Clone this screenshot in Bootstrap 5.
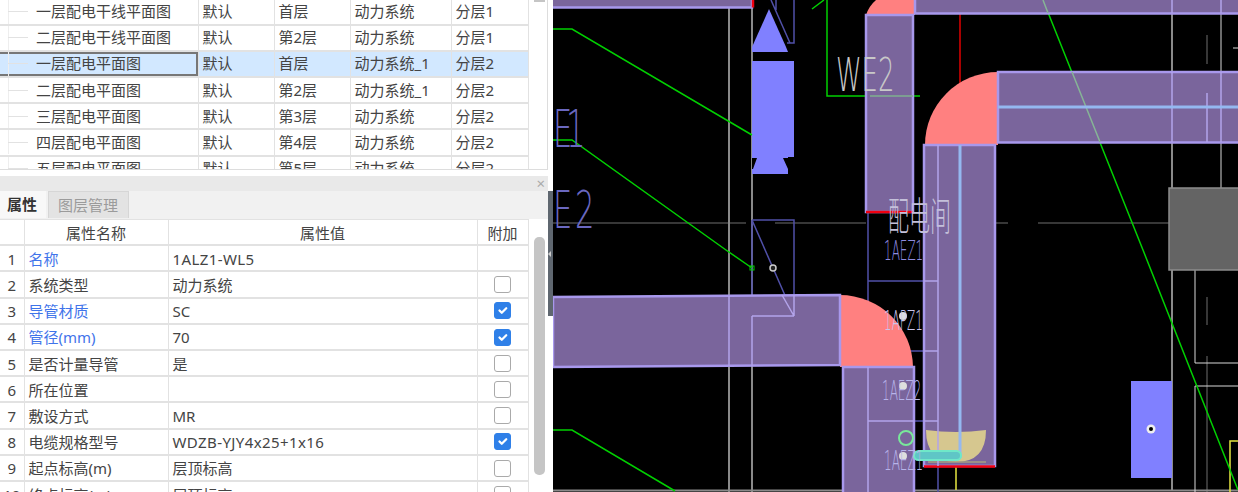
<!DOCTYPE html>
<html lang="zh-CN">
<head>
  <meta charset="UTF-8" />
  <title>配电平面图</title>
  <link href="https://cdn.jsdelivr.net/npm/bootstrap@5.3.0/dist/css/bootstrap.min.css" rel="stylesheet">
  <style>
    html, body { height: 492px; overflow: hidden; margin: 0; background: #fff; }
    body { font-family: "Noto Sans", "Noto Sans CJK SC", sans-serif; font-size: 15px; color: #444; line-height: 1; }

    .app-shell { width: 1238px; height: 492px; }
    .side-panel { width: 548px; flex: none; }
    .top-pane { height: 170px; overflow: hidden; border-bottom: 1px solid #ddd; border-right: 1px solid #ddd; }
    .gap-pane { height: 6px; }
    .title-bar { height: 15px; background: #e9e9e9; color: #aaa; font-size: 15px; padding-right: 3px; }
    .tab-strip { height: 28px; background: #f1f1f1; }
    .tab-on, .tab-off { height: 27px; font-size: 15px; white-space: nowrap; }
    .tab-on { width: 46px; padding: 0 7px; background: #f8f8f8; color: #333; font-weight: 700; }
    .tab-off { width: 81px; padding: 0 9px; margin-left: 2px; background: #e3e3e3; color: #9b9b9b; border: 1px solid #d6d6d6; border-bottom: 0; }
    .prop-pane { height: 273px; overflow: hidden; }

    .grid-table { width: 528px; table-layout: fixed; margin: 0; flex: none; border-collapse: collapse; }
    .grid-table td, .grid-table th {
      height: 26.2px; padding: 0 4px 0 4px; border: 1px solid #e2e2e2; border-top-width: 2px;
      font-size: 15px; font-weight: 400; color: #444; vertical-align: middle; white-space: nowrap; overflow: hidden;
      box-shadow: none; background: #fff;
    }
    .grid-table tr > :first-child { border-left: 0; }
    .top-table { margin-top: -2.6px; }
    .prop-table { margin-top: -1px; }
    .prop-table td, .prop-table th { padding-top: 2px; }
    .top-table tr.row-sel td { background: #d2e8ff; }
    .top-table tr.row-sel td.cell-focus { box-shadow: inset 0 2px #777, inset -2px 0 #777, inset 0 -2px #777; background: #d2e8ff; }
    .tree-stub { width: 36px; height: 24px; flex: none;
      background: linear-gradient(#e2e2e2, #e2e2e2) 8px center / 20px 1px no-repeat, linear-gradient(#eee, #eee) 8px 0 / 1px 100% no-repeat; }
    .top-table td.cell-name { padding: 0; }

    .col-tree { width: 198px; } .col-a { width: 76px; } .col-b { width: 76px; } .col-c { width: 101px; } .col-d { width: 77px; }
    .col-num { width: 24px; } .col-key { width: 144px; } .col-val { width: 309px; } .col-add { width: 51px; }
    .prop-table th { text-align: center; background: #fff; }
    .prop-table td.cell-num { text-align: center; padding: 2px 0 0 0; }
    .prop-table td.cell-add { text-align: center; padding: 0; }
    .key-blue { color: #3f74ea !important; }
    .val-latin { letter-spacing: .4px; }
    .prop-table .form-check-input { width: 17px; height: 17px; margin: 0; float: none; vertical-align: middle; border: 1.5px solid #aaa; border-radius: 3px; }
    .prop-table .form-check-input:checked { background-color: #2f80e8; border-color: #2f80e8; }

    .rail { flex: 1; }
    .rail-thumb { width: 11px; height: 238px; margin: 18px 0 0 5px; background: #c5c5c5; border-radius: 5px; }
    .rail-end { width: 11px; height: 2px; margin-left: 5px; background: #c5c5c5; }

    .splitter { width: 5px; flex: none; }
    .splitter-top { height: 191px; background: #fff; }
    .splitter-grip { height: 125px; background: #5f6770; }
    .grip-arrow { width: 0; height: 0; border: 3px solid transparent; border-right-color: #ccc; border-left-width: 0; }
    .splitter-end { flex: 1; background: #fff; }

    .cad-view { width: 685px; height: 492px; flex: none; background: #000; display: block; }
    .cad-view text { font-family: "DejaVu Sans", "Noto Sans CJK SC", sans-serif; font-weight: 200; }
  </style>
</head>
<body>
  <div class="app-shell d-flex">
    <div class="side-panel d-flex flex-column">
      <!-- drawing list -->
      <div class="top-pane d-flex">
        <table class="table grid-table top-table">
          <colgroup><col class="col-tree"><col class="col-a"><col class="col-b"><col class="col-c"><col class="col-d"></colgroup>
          <tbody>
            <tr><td class="cell-name"><div class="d-flex align-items-center"><span class="tree-stub"></span>一层配电干线平面图</div></td><td>默认</td><td>首层</td><td>动力系统</td><td>分层1</td></tr>
            <tr><td class="cell-name"><div class="d-flex align-items-center"><span class="tree-stub"></span>二层配电干线平面图</div></td><td>默认</td><td>第2层</td><td>动力系统</td><td>分层1</td></tr>
            <tr class="row-sel"><td class="cell-name cell-focus"><div class="d-flex align-items-center"><span class="tree-stub"></span>一层配电平面图</div></td><td>默认</td><td>首层</td><td>动力系统_1</td><td>分层2</td></tr>
            <tr><td class="cell-name"><div class="d-flex align-items-center"><span class="tree-stub"></span>二层配电平面图</div></td><td>默认</td><td>第2层</td><td>动力系统_1</td><td>分层2</td></tr>
            <tr><td class="cell-name"><div class="d-flex align-items-center"><span class="tree-stub"></span>三层配电平面图</div></td><td>默认</td><td>第3层</td><td>动力系统</td><td>分层2</td></tr>
            <tr><td class="cell-name"><div class="d-flex align-items-center"><span class="tree-stub"></span>四层配电平面图</div></td><td>默认</td><td>第4层</td><td>动力系统</td><td>分层2</td></tr>
            <tr><td class="cell-name"><div class="d-flex align-items-center"><span class="tree-stub"></span>五层配电平面图</div></td><td>默认</td><td>第5层</td><td>动力系统</td><td>分层2</td></tr>
          </tbody>
        </table>
        <div class="rail"><div class="rail-end"></div></div>
      </div>
      <div class="gap-pane"></div>

      <div class="title-bar d-flex align-items-center justify-content-end">×</div>

      <div class="tab-strip d-flex">
        <div class="tab-on d-flex align-items-center">属性</div>
        <div class="tab-off d-flex align-items-center">图层管理</div>
      </div>

      <!-- property grid -->
      <div class="prop-pane d-flex">
        <table class="table grid-table prop-table">
          <colgroup><col class="col-num"><col class="col-key"><col class="col-val"><col class="col-add"></colgroup>
          <thead>
            <tr><th></th><th>属性名称</th><th>属性值</th><th>附加</th></tr>
          </thead>
          <tbody>
            <tr><td class="cell-num">1</td><td class="key-blue">名称</td><td class="val-latin">1ALZ1-WL5</td><td class="cell-add"></td></tr>
            <tr><td class="cell-num">2</td><td>系统类型</td><td>动力系统</td><td class="cell-add"><input class="form-check-input" type="checkbox"></td></tr>
            <tr><td class="cell-num">3</td><td class="key-blue">导管材质</td><td>SC</td><td class="cell-add"><input class="form-check-input" type="checkbox" checked></td></tr>
            <tr><td class="cell-num">4</td><td class="key-blue">管径(mm)</td><td>70</td><td class="cell-add"><input class="form-check-input" type="checkbox" checked></td></tr>
            <tr><td class="cell-num">5</td><td>是否计量导管</td><td>是</td><td class="cell-add"><input class="form-check-input" type="checkbox"></td></tr>
            <tr><td class="cell-num">6</td><td>所在位置</td><td></td><td class="cell-add"><input class="form-check-input" type="checkbox"></td></tr>
            <tr><td class="cell-num">7</td><td>敷设方式</td><td>MR</td><td class="cell-add"><input class="form-check-input" type="checkbox"></td></tr>
            <tr><td class="cell-num">8</td><td>电缆规格型号</td><td class="val-latin">WDZB-YJY4x25+1x16</td><td class="cell-add"><input class="form-check-input" type="checkbox" checked></td></tr>
            <tr><td class="cell-num">9</td><td>起点标高(m)</td><td>层顶标高</td><td class="cell-add"><input class="form-check-input" type="checkbox"></td></tr>
            <tr><td class="cell-num">10</td><td>终点标高(m)</td><td>层顶标高</td><td class="cell-add"><input class="form-check-input" type="checkbox"></td></tr>
          </tbody>
        </table>
        <div class="rail"><div class="rail-thumb"></div></div>
      </div>
    </div>

    <div class="splitter d-flex flex-column">
      <div class="splitter-top"></div>
      <div class="splitter-grip d-flex align-items-center"><div class="grip-arrow"></div></div>
      <div class="splitter-end"></div>
    </div>

    <!-- CAD drawing -->
    <svg class="cad-view" viewBox="553 0 685 492" fill="none">
      <!-- grid lines -->
      <g stroke="#4a4a4a" stroke-width="1.5">
        <path d="M553 223H718M717 223H746M775 223H866M980 223H1008M1038 223H1170"/>
        <path d="M1207 0V5M1207 35V64M1207 93V140M1207 297V325M1207 356V492"/>
      </g>
      <g stroke="#8a8a8a" stroke-width="2">
        <path d="M729 0V492M752 0V492M1172 0V188M1172 270V490M553 490.500H1238"/>
      </g>
      <g stroke="#d8d8d8" stroke-width="1">
        <path d="M1221 0V188M1195 270V363H1238M1195 492V386H1238"/>
        <path d="M1233 48H1238M1222 135H1232L1236 132H1238"/>
      </g>
      <path d="M956 467V490M1230 492V441H1238" stroke="#e6e640" stroke-width="1.500"/>
      <path d="M960 0V85" stroke="#e00000" stroke-width="1.500"/>

      <!-- dark blue outlines -->
      <g stroke="#5050a8" stroke-width="1.500">
        <path d="M794 0V43H787M771 0L790 43M776 0V10"/>
        <path d="M752 220H794V316M752 220L794 316M752 220V316"/>
        <path d="M868 212V492M938 250V492M868 281H924M868 351H924M868 421H924"/>
      </g>

      <!-- equipment blocks -->
      <g fill="#8080ff">
        <path d="M769 9L786 47L788 52H752V47Z"/>
        <rect x="752" y="61" width="42" height="96"/>
        <path d="M752 157H788V174H752Z"/>
        <rect x="1131" y="381" width="41" height="97"/>
      </g>
      <path d="M752 158h5l-4 11h-1zM783 158h5v11z" fill="#000"/>

      <!-- salmon elbows -->
      <g fill="#ff8080">
        <path d="M866 15Q869 6 876 0H915V15Z"/>
        <path d="M925 145A73 73 0 0 1 998 72V145Z"/>
        <path d="M840 295A73 73 0 0 1 913 367H840Z"/>
      </g>

      <!-- green leaders -->
      <g stroke="#00d000" stroke-width="1.500">
        <path d="M553 29H572L752 135"/>
        <path d="M553 140H572L726 250L752 268"/>
        <path d="M553 430H572L675 491"/>
        <path d="M812 9L824 0M827 0V96H920"/>
        <path d="M1043 0L1143 250L1238 490"/>
      </g>
      <rect x="750" y="266" width="4" height="4" stroke="#00d000"/>

      <!-- translucent ducts -->
      <g fill="#7a659c" stroke="#a898ec" stroke-width="2.500">
        <rect x="866" y="15" width="47" height="197"/>
        <rect x="915" y="-5" width="330" height="18.500"/>
        <rect x="998" y="72" width="245" height="70.500"/>
        <rect x="924" y="145" width="71" height="321"/>
        <path d="M553 297L840 295V365L553 367Z"/>
        <rect x="843" y="367" width="71" height="130"/>
        <rect x="540" y="-5" width="212" height="12.500"/>
      </g>

      <!-- bowl under the riser -->
      <path d="M926 430Q956 434 986 430Q986 462 956 462Q926 462 926 430Z" fill="#d6c78f"/>
      <path d="M928 462H986" stroke="#a89f80" stroke-width="1.500"/>
      <path d="M866 212H913M924 466.500H995M753 0V7.500" stroke="#f00010" stroke-width="2.500"/>

      <!-- lines seen through the ducts -->
      <g stroke="#b3a4ea" stroke-width="1.500">
        <path d="M729 296V366M752 316V366M752 316H794M794 295V316M782 295L794 316"/>
        <path d="M1172 0V13M1172 72V142M1221 0V13M1221 72V142M1207 93V142"/>
        <path d="M868 367V492M938 145V466M868 421H914M924 281H938M924 351H938M924 421H938"/>
      </g>
      <path d="M870 96H913" stroke="#7fb08f" stroke-width="1.500"/>
      <path d="M1072 72L1100 142M1043 0L1048 13" stroke="#86b596" stroke-width="1.500"/>
      <path d="M998 107H1238M960 145V458" stroke="#94b8f0" stroke-width="3"/>

      <!-- cable tag -->
      <rect x="914" y="451" width="47" height="9" rx="4.500" fill="#5fc6c6" stroke="#6fe8c8" stroke-width="2"/>
      <circle cx="906" cy="438" r="7" stroke="#78e89a" stroke-width="2"/>

      <!-- points -->
      <g fill="#dedede">
        <circle cx="903" cy="316" r="4"/><circle cx="903" cy="386" r="4"/><circle cx="903" cy="456" r="4"/>
      </g>
      <circle cx="773" cy="268" r="3" fill="#222" stroke="#ccc" stroke-width="1.500"/>
      <circle cx="1151" cy="429" r="4.500" fill="#eee"/>
      <circle cx="1151" cy="429" r="2" fill="#000"/>

      <!-- CAD labels -->
      <g fill="#6a68c0">
        <text transform="translate(553 147) scale(.9 1.500)" font-size="34" textLength="36">E1</text>
        <text transform="translate(553 228) scale(.9 1.500)" font-size="34" textLength="46">E2</text>
      </g>
      <text transform="translate(836 91) scale(.72 1.300)" font-size="36" fill="#c8c8c8">WE2</text>
      <text transform="translate(888 230) scale(1 1.850)" font-size="21" fill="#c4c0da">配电间</text>
      <g fill="#8f8ce0" font-size="20">
        <text transform="translate(884 260) scale(.6 1.300)">1AEZ1</text>
        <text transform="translate(884 330) scale(.6 1.300)" fill="#c8c4ee">1APZ1</text>
        <text transform="translate(882 400) scale(.6 1.300)" fill="#b8b4ea">1AEZ2</text>
        <text transform="translate(884 470) scale(.6 1.300)" fill="#b8b4ea">1AEZ1</text>
      </g>

      <!-- grey block -->
      <rect x="1169" y="188" width="75" height="82" fill="#646464" stroke="#8c8c8c" stroke-width="1.500"/>
    </svg>
  </div>
  <script src="https://cdn.jsdelivr.net/npm/bootstrap@5.3.0/dist/js/bootstrap.bundle.min.js"></script>
</body>
</html>
